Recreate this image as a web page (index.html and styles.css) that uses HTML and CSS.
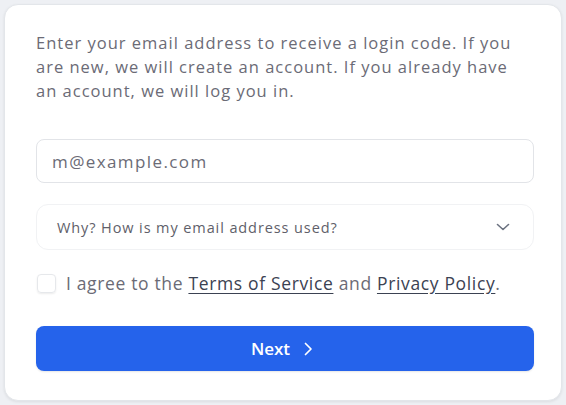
FILE: index.html
```html
<!DOCTYPE html>
<html lang="en">
<head>
<meta charset="utf-8">
<link rel="stylesheet" href="styles.css">
</head>
<body>
<div class="card">
  <p class="intro">Enter your email address to receive a login code. If you are new, we will create an account. If you already have an account, we will log you in.</p>
  <input class="email" type="email" placeholder="m@example.com">
  <div class="why">
    <span>Why? How is my email address used?</span>
    <svg class="chev-down" width="14" height="14" viewBox="0 0 14 14"><path d="M1.5 4.5 L7 9.5 L12.5 4.5" fill="none" stroke="#6b7280" stroke-width="1.6" stroke-linecap="round" stroke-linejoin="round"/></svg>
  </div>
  <label class="agree">
    <span class="box"></span>
    <span class="agree-text">I agree to the <a href="#">Terms of Service</a> and <a href="#">Privacy Policy</a>.</span>
  </label>
  <button class="next" type="button">Next <svg width="10" height="14" viewBox="0 0 10 14"><path d="M2.5 1.5 L8 7 L2.5 12.5" fill="none" stroke="#fff" stroke-width="1.7" stroke-linecap="round" stroke-linejoin="round"/></svg></button>
</div>
</body>
</html>
```
FILE: styles.css
```css
html, body { margin: 0; padding: 0; }
body {
  background: #eef0f4;
  font-family: "Open Sans", "Noto Sans", sans-serif;
  width: 566px;
  height: 405px;
  overflow: hidden;
}
.card {
  box-sizing: border-box;
  margin: 4px 0 0 4px;
  width: 558px;
  height: 397px;
  background: #fff;
  border: 1px solid #e3e6ea;
  border-radius: 14px;
  box-shadow: 0 1px 3px rgba(0,0,0,0.08);
  padding: 26px 27px 0 31px;
  display: flex;
  flex-direction: column;
}
.intro {
  margin: 0;
  max-width: 482px;
  font-size: 16.5px;
  line-height: 24px;
  color: #6b6b76;
  letter-spacing: 1px;
}
.email {
  box-sizing: border-box;
  margin-top: 36px;
  height: 44px;
  width: 100%;
  border: 1px solid #e2e4e8;
  border-radius: 8px;
  padding: 0 15px;
  font-family: inherit;
  font-size: 17px;
  color: #333;
  outline: none;
  letter-spacing: 1.4px;
}
.email::placeholder { color: #6b6b76; }
.why {
  box-sizing: border-box;
  margin-top: 21px;
  height: 46px;
  border: 1px solid #f1f2f4;
  border-radius: 12px;
  display: flex;
  align-items: center;
  justify-content: space-between;
  padding: 0 23px 0 20px;
  font-size: 14.5px;
  color: #5f5f6a;
  letter-spacing: 0.9px;
}
.chev-down { display: block; }
.agree {
  margin-top: 23px;
  display: flex;
  align-items: center;
  gap: 10px;
  font-size: 17.5px;
  color: #6b6b76;
  height: 20px;
  letter-spacing: 0.65px;
}
.box {
  box-sizing: border-box;
  width: 19px;
  height: 19px;
  margin-left: 1px;
  border: 1px solid #e6e8eb;
  border-radius: 4px;
  box-shadow: 0 1px 2px rgba(0,0,0,0.08);
  flex: none;
}
.agree a {
  color: #3b4252;
  text-decoration: underline;
  text-underline-offset: 3px;
}
.next {
  margin-top: 33px;
  height: 45px;
  width: 100%;
  border: none;
  border-radius: 8px;
  background: #2563eb;
  color: #fff;
  font-family: inherit;
  font-size: 17px;
  font-weight: 600;
  display: flex;
  align-items: center;
  justify-content: center;
  gap: 13px;
  box-shadow: 0 1px 2px rgba(0,0,0,0.1);
  padding: 0 6px 0 0;
}
.next svg { display: block; }
```
